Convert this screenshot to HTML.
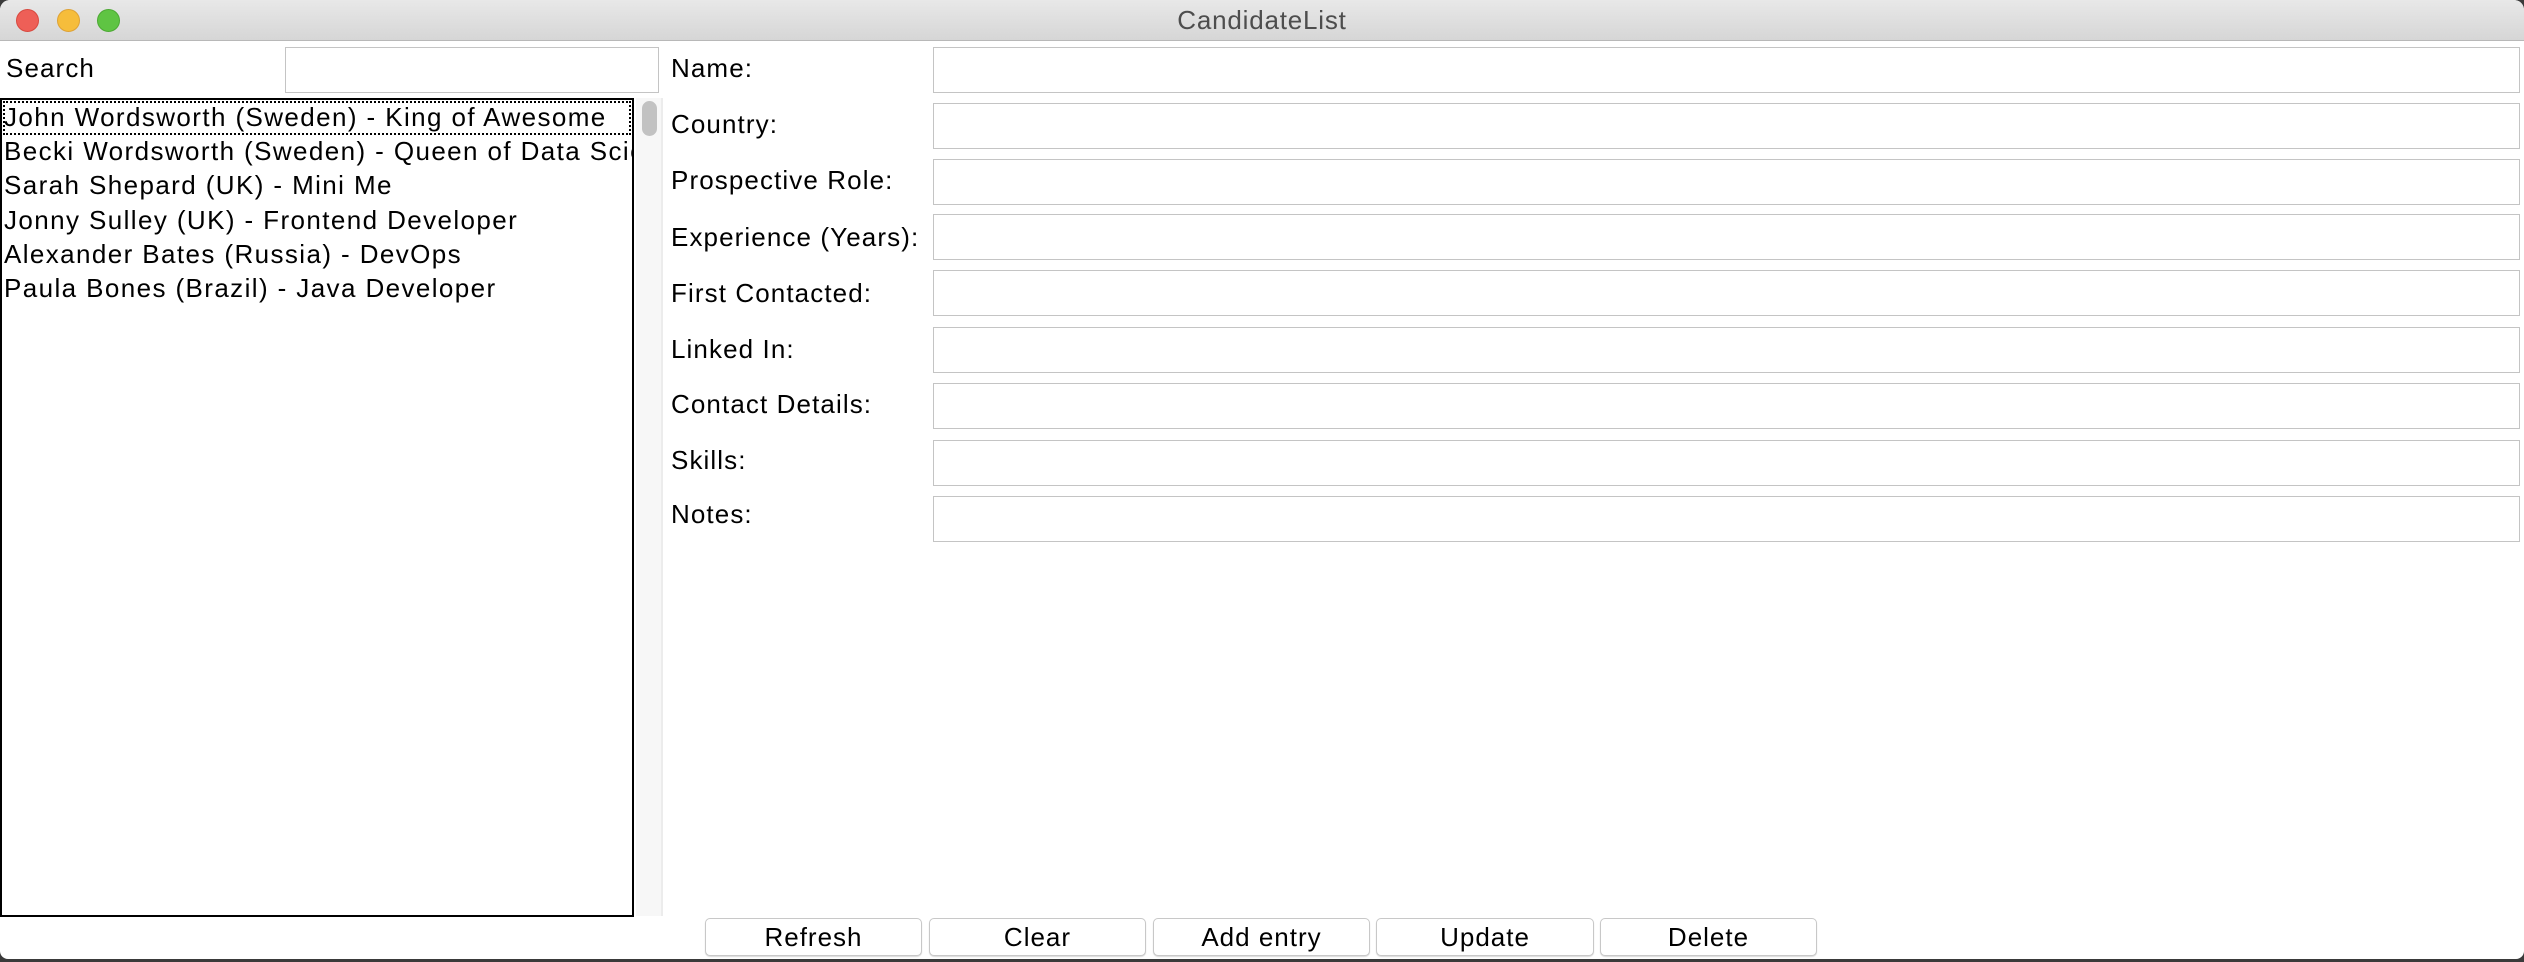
<!DOCTYPE html>
<html><head><meta charset="utf-8"><style>
*{margin:0;padding:0;box-sizing:border-box}
body{width:2524px;height:962px;background:#3a3a3a;position:relative;overflow:hidden;font-family:"Liberation Sans",sans-serif;color:#000}
.win{position:absolute;left:0;top:0;width:2524px;height:959px;background:#fff;border-radius:10px 10px 8px 8px;overflow:hidden}
.title{position:absolute;left:0;top:0;width:2524px;height:41px;background:linear-gradient(#e8e8e8,#d6d6d6);border-bottom:1px solid #b8b8b8;text-align:center;font-size:26px;line-height:41px;color:#4d4d4d;letter-spacing:0.8px}
.dot{position:absolute;top:9px;width:23px;height:23px;border-radius:50%}
.t{position:absolute;font-size:26px;line-height:30px;white-space:nowrap;letter-spacing:1.1px}
.entry{position:absolute;border:1px solid #c4c4c4;background:#fff}
.list{position:absolute;left:0;top:98px;width:634px;height:819px;border:2px solid #000;overflow:hidden}
.row{position:absolute;left:2px;font-size:26px;white-space:nowrap;letter-spacing:1.4px}
.btn{position:absolute;top:918px;height:38px;border:1px solid #c8c8c8;border-radius:5px;background:#fff;box-shadow:0 1px 1px rgba(0,0,0,.15);font-size:26px;text-align:center;line-height:36px;letter-spacing:1px}
</style></head><body>
<div class="win">
<div class="title">CandidateList</div>
<div class="dot" style="left:16px;background:#ee5f57;border:1px solid #d8493f"></div>
<div class="dot" style="left:57px;background:#f6bd3b;border:1px solid #dea235"></div>
<div class="dot" style="left:97px;background:#5fc443;border:1px solid #4ca933"></div>

<div class="t" style="left:6px;top:53px">Search</div>
<div class="entry" style="left:285px;top:47px;width:374px;height:46px"></div>

<div class="list">
<div style="position:absolute;left:1px;top:1px;width:628px;height:34px;border:2px dotted #000"></div>
<div class="row" style="top:2px">John Wordsworth (Sweden) - King of Awesome</div>
<div class="row" style="top:36px">Becki Wordsworth (Sweden) - Queen of Data Science</div>
<div class="row" style="top:70px">Sarah Shepard (UK) - Mini Me</div>
<div class="row" style="top:105px">Jonny Sulley (UK) - Frontend Developer</div>
<div class="row" style="top:139px">Alexander Bates (Russia) - DevOps</div>
<div class="row" style="top:173px">Paula Bones (Brazil) - Java Developer</div>
</div>
<div style="position:absolute;left:636px;top:98px;width:27px;height:818px;background:#f7f7f7;border-right:2px solid #ececec"></div>
<div style="position:absolute;left:642px;top:101px;width:15px;height:35px;border-radius:8px;background:#c2c2c2"></div>

<div class="t" style="left:671px;top:53px">Name:</div>
<div class="t" style="left:671px;top:109px">Country:</div>
<div class="t" style="left:671px;top:165px">Prospective Role:</div>
<div class="t" style="left:671px;top:222px">Experience (Years):</div>
<div class="t" style="left:671px;top:278px">First Contacted:</div>
<div class="t" style="left:671px;top:334px">Linked In:</div>
<div class="t" style="left:671px;top:389px">Contact Details:</div>
<div class="t" style="left:671px;top:445px">Skills:</div>
<div class="t" style="left:671px;top:499px">Notes:</div>

<div class="entry" style="left:933px;top:47px;width:1587px;height:46px"></div>
<div class="entry" style="left:933px;top:103px;width:1587px;height:46px"></div>
<div class="entry" style="left:933px;top:159px;width:1587px;height:46px"></div>
<div class="entry" style="left:933px;top:214px;width:1587px;height:46px"></div>
<div class="entry" style="left:933px;top:270px;width:1587px;height:46px"></div>
<div class="entry" style="left:933px;top:327px;width:1587px;height:46px"></div>
<div class="entry" style="left:933px;top:383px;width:1587px;height:46px"></div>
<div class="entry" style="left:933px;top:440px;width:1587px;height:46px"></div>
<div class="entry" style="left:933px;top:496px;width:1587px;height:46px"></div>

<div class="btn" style="left:705px;width:217px">Refresh</div>
<div class="btn" style="left:929px;width:217px">Clear</div>
<div class="btn" style="left:1153px;width:217px">Add entry</div>
<div class="btn" style="left:1376px;width:218px">Update</div>
<div class="btn" style="left:1600px;width:217px">Delete</div>
</div>
</body></html>
